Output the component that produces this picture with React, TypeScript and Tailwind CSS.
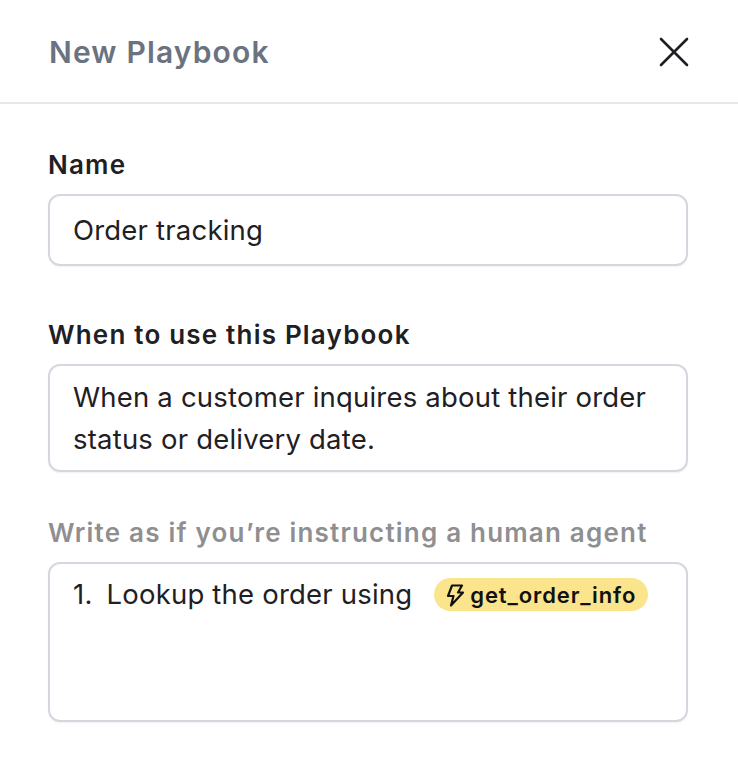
import React from 'react';

const font = 'font-["Inter",sans-serif]';
const box = 'w-[640px] border-2 border-[#d5d7df] rounded-xl px-[23px] text-[27.5px] tracking-[0.2px] text-[#1f2024] shadow-[0_1px_2px_rgba(0,0,0,0.06)]';
const label = 'text-[26px] leading-[34px] font-semibold tracking-[1.2px] mb-[12px]';

export default function App() {
  return (
    <div className={`w-[738px] h-[772px] bg-white flex flex-col ${font}`}>
      {/* Header */}
      <div className="h-[104px] shrink-0 border-b-2 border-[#e8e8ea] pl-[49px] pr-[49px] flex items-center justify-between">
        <h1 className="text-[30px] leading-[36px] pt-[2px] font-semibold text-[#6b7280] tracking-[1.15px]">New Playbook</h1>
        <svg width="30" height="30" viewBox="0 0 30 30" fill="none" stroke="#1f2024" strokeWidth="2.6" strokeLinecap="round" className="mt-[1px]">
          <path d="M2 2L28 28M28 2L2 28" />
        </svg>
      </div>
      {/* Form */}
      <div className="flex flex-col px-[48px] pt-[44px]">
        <label className={`${label} text-[#1f2024]`}>Name</label>
        <div className={`${box} h-[72px] flex items-center pt-[2px]`}>Order tracking</div>
        <label className={`${label} text-[#1f2024] mt-[52px]`}>When to use this Playbook</label>
        <div className={`${box} h-[108px] leading-[42px] pt-[10px]`}>
          When a customer inquires about their order status or delivery date.
        </div>
        <label className={`${label} text-[#8f8f92] mt-[44px]`}>Write as if you’re instructing a human agent</label>
        <div className={`${box} h-[160px] pt-[9px] leading-[42px]`}>
          <div className="flex items-center">
            <span className="mr-[14px]">1.</span>
            <span>Lookup the order using</span>
            <span className="ml-[22px] mt-[1px] h-[33px] rounded-full bg-[#fbe58c] pl-[9px] pr-[12px] flex items-center gap-[3px] text-[22px] font-semibold tracking-[0.9px] text-[#111]">
              <svg width="24" height="24" viewBox="0 0 24 24" fill="none" stroke="#111" strokeWidth="2.2" strokeLinejoin="round" strokeLinecap="round">
                <path d="M9 2.5H19L15 9.5H20L8 22.5L10.5 13H5L9 2.5Z" />
              </svg>
              get_order_info
            </span>
          </div>
        </div>
      </div>
    </div>
  );
}
